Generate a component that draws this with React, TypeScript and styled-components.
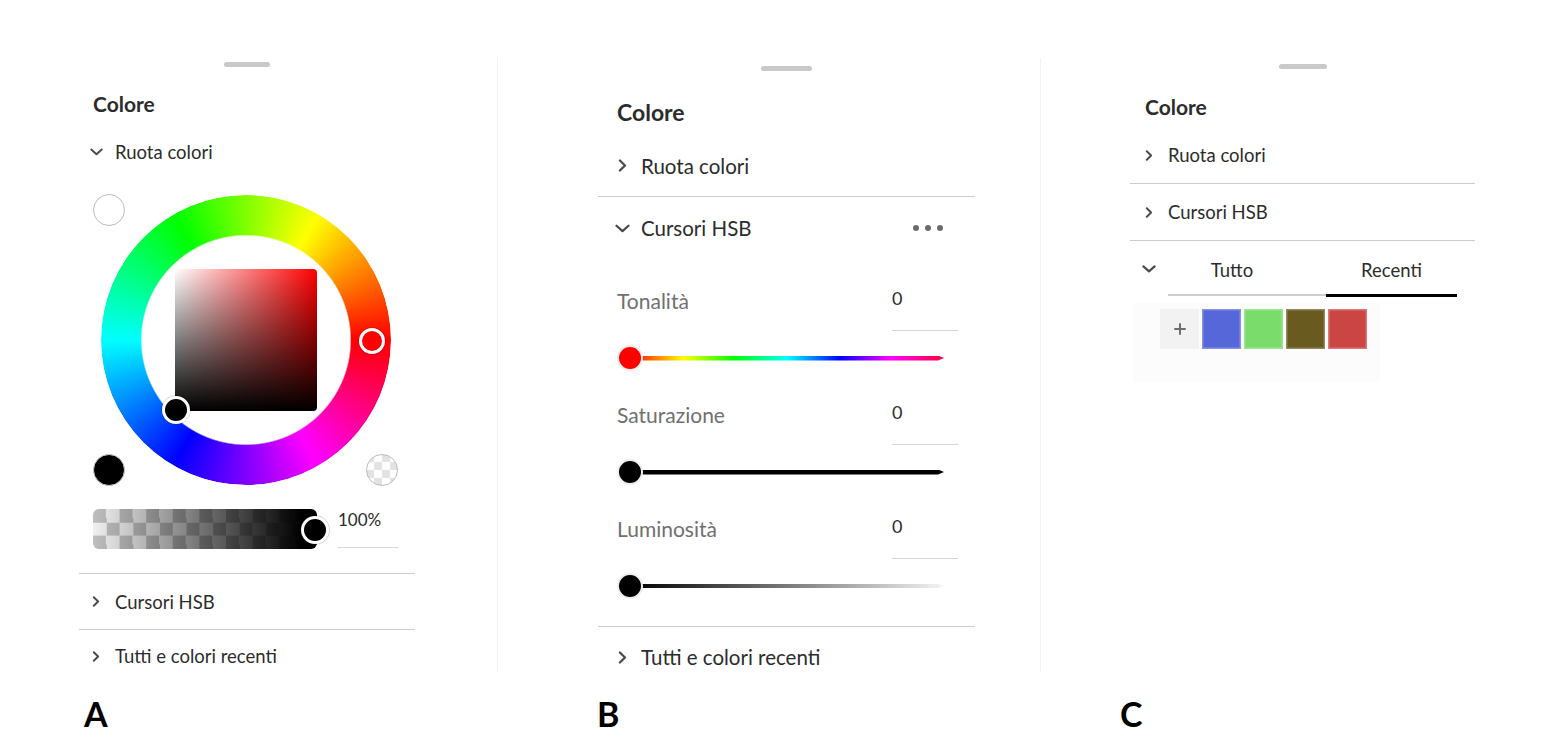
import React from "react";
import styled, { createGlobalStyle } from "styled-components";

const Global = createGlobalStyle`
  html, body { margin: 0; padding: 0; background: #ffffff; }
  body {
    font-family: Lato, "Noto Sans", sans-serif;
    color: #2c2c2c;
    width: 1560px;
    height: 752px;
    overflow: hidden;
  }
  * { box-sizing: border-box; }
`;

const Page = styled.main`
  display: flex;
  align-items: flex-start;
  padding: 58px 0 0 79px;
`;

const Column = styled.div<{ $width: number; $gap?: number }>`
  display: flex;
  flex-direction: column;
  flex-shrink: 0;
  width: ${(p) => p.$width}px;
  margin-left: ${(p) => p.$gap ?? 0}px;
`;

const Panel = styled.section<{ $padTop: number; $framed?: boolean; $padLeft?: number; $padRight?: number }>`
  height: 614px;
  display: flex;
  flex-direction: column;
  padding: ${(p) => p.$padTop}px ${(p) => p.$padRight ?? 0}px 0 ${(p) => p.$padLeft ?? 0}px;
  border-left: ${(p) => (p.$framed ? "1px solid #f3f3f3" : "none")};
  border-right: ${(p) => (p.$framed ? "1px solid #f3f3f3" : "none")};
  & > * { flex-shrink: 0; }
`;

const Handle = styled.div<{ $width: number }>`
  align-self: center;
  width: ${(p) => p.$width}px;
  height: 5px;
  border-radius: 3px;
  background: #c9c9c9;
`;

const Title = styled.h2<{ $size: number; $indent: number; $mt: number; $lh: number }>`
  margin: ${(p) => p.$mt}px 0 0 ${(p) => p.$indent}px;
  font-size: ${(p) => p.$size}px;
  line-height: ${(p) => p.$lh}px;
  font-weight: 700;
  color: #2c2c2c;
`;

const AccRow = styled.div<{ $height: number; $divider?: boolean; $size: number; $padLeft: number; $mt?: number }>`
  display: flex;
  align-items: center;
  height: ${(p) => p.$height + (p.$divider ? 1 : 0)}px;
  margin-top: ${(p) => p.$mt ?? 0}px;
  padding-left: ${(p) => p.$padLeft}px;
  border-bottom: ${(p) => (p.$divider ? "1px solid #cdcdcd" : "none")};
  font-size: ${(p) => p.$size}px;
  color: #2c2c2c;
`;

const IconBox = styled.span<{ $width: number; $gap: number }>`
  display: flex;
  align-items: center;
  justify-content: center;
  width: ${(p) => p.$width}px;
  margin-right: ${(p) => p.$gap}px;
  color: #4a4a4a;
`;

const RowText = styled.span`
  line-height: 24px;
`;

const Divider = styled.div<{ $mt: number }>`
  margin-top: ${(p) => p.$mt}px;
  height: 1px;
  background: #cdcdcd;
`;

const Dots = styled.span`
  display: flex;
  gap: 6px;
  margin-left: auto;
  margin-right: 32px;
`;

const Dot = styled.span`
  width: 6px;
  height: 6px;
  border-radius: 50%;
  background: #6b6b6b;
`;

/* ---------- Wheel (panel A) ---------- */

const WheelArea = styled.div`
  position: relative;
  width: 305px;
  height: 292px;
  margin: 22px 0 0 14px;
  padding-top: 1px;
  display: flex;
  justify-content: center;
  align-items: flex-start;
`;

const Wheel = styled.div`
  position: relative;
  width: 290px;
  height: 290px;
  border-radius: 50%;
  display: flex;
  align-items: center;
  justify-content: center;
`;

const HueRing = styled.div`
  position: absolute;
  inset: 0;
  border-radius: 50%;
  background: conic-gradient(from 90deg, #ff0000, #ff00ff, #0000ff, #00ffff, #00ff00, #ffff00, #ff0000);
  -webkit-mask: radial-gradient(circle closest-side, transparent 104px, #000 105.5px);
  mask: radial-gradient(circle closest-side, transparent 104px, #000 105.5px);
`;

const SBSquare = styled.div`
  position: relative;
  width: 142px;
  height: 142px;
  border-radius: 4px;
  background: linear-gradient(to bottom, rgba(0, 0, 0, 0), #000), linear-gradient(to right, #ffffff, #ff0000);
`;

const KnobOnWheel = styled.div<{ $x: number; $y: number; $size: number; $fill: string }>`
  position: absolute;
  left: ${(p) => p.$x - p.$size / 2}px;
  top: ${(p) => p.$y - p.$size / 2}px;
  width: ${(p) => p.$size}px;
  height: ${(p) => p.$size}px;
  border-radius: 50%;
  background: ${(p) => p.$fill};
  border: 3px solid #ffffff;
  box-shadow: 0 0 0 1px rgba(0, 0, 0, 0.12);
`;

const CornerSwatch = styled.div<{ $pos: "tl" | "bl" | "br"; $kind: "white" | "black" | "clear" }>`
  position: absolute;
  width: 32px;
  height: 32px;
  border-radius: 50%;
  ${(p) => (p.$pos === "tl" ? "left: 0; top: 0;" : p.$pos === "bl" ? "left: 0; bottom: 0;" : "right: 0; bottom: 0;")}
  border: 1.5px solid ${(p) => (p.$kind === "black" ? "#c9c9c9" : "#bdbdbd")};
  background: ${(p) =>
    p.$kind === "white"
      ? "#ffffff"
      : p.$kind === "black"
      ? "#000000"
      : "repeating-conic-gradient(#ffffff 0% 25%, #e3e3e3 0% 50%) 50% 50% / 16px 16px"};
`;

const AlphaRow = styled.div`
  display: flex;
  align-items: flex-start;
  height: 40px;
  margin: 23px 0 0 14px;
`;

const AlphaTrack = styled.div`
  position: relative;
  width: 224px;
  height: 40px;
  border-radius: 6px;
  background-image: linear-gradient(to right, rgba(0, 0, 0, 0.02), #000 93%),
    repeating-conic-gradient(#f5f5f5 0% 25%, #c2c2c2 0% 50%);
  background-size: 100% 100%, 26.6px 26.6px;
  background-position: 0 0, 0 0;
`;

const AlphaKnob = styled.div`
  position: absolute;
  left: 208px;
  top: 7px;
  width: 28px;
  height: 28px;
  border-radius: 50%;
  background: #000;
  border: 3px solid #fff;
  box-shadow: 0 0 0 1px rgba(0, 0, 0, 0.15);
`;

const AlphaValue = styled.div`
  margin-left: 21px;
  width: 60px;
  height: 39px;
  border-bottom: 1px solid #d9d9d9;
  font-size: 17px;
  line-height: 22px;
  color: #2c2c2c;
`;

/* ---------- HSB sliders (panel B) ---------- */

const SliderStack = styled.div`
  display: flex;
  flex-direction: column;
  gap: 26px;
  margin-top: 25px;
`;

const SliderGroup = styled.div`
  display: flex;
  flex-direction: column;
`;

const FieldRow = styled.div`
  display: flex;
  justify-content: space-between;
  align-items: flex-start;
  padding: 0 17px 0 19px;
`;

const FieldLabel = styled.span`
  margin-top: 3px;
  font-size: 21px;
  line-height: 28px;
  color: #707070;
`;

const ValueBox = styled.div`
  width: 66px;
  height: 47px;
  border-bottom: 1px solid #d6d6d6;
  font-size: 18px;
  line-height: 28px;
  color: #2c2c2c;
`;

const SliderRow = styled.div`
  position: relative;
  display: flex;
  align-items: center;
  width: 327px;
  height: 28px;
  margin: 13px 0 0 19px;
`;

const trackBg: Record<string, string> = {
  hue: "linear-gradient(to right, #ff0000, #ffff00 17%, #00ff00 33%, #00ffff 50%, #0000ff 67%, #ff00ff 83%, #ff0040)",
  sat: "#000000",
  lum: "linear-gradient(to right, #000000, #f4f4f4)",
};

const Track = styled.div<{ $kind: "hue" | "sat" | "lum" }>`
  flex: 1;
  margin-left: 13px;
  height: ${(p) => (p.$kind === "lum" ? 4 : 5)}px;
  background: ${(p) => trackBg[p.$kind]};
  clip-path: polygon(0 0, calc(100% - 6px) 0, 100% 50%, calc(100% - 6px) 100%, 0 100%);
`;

const Thumb = styled.div<{ $fill: string }>`
  position: absolute;
  left: 0;
  top: 1px;
  width: 26px;
  height: 26px;
  border-radius: 50%;
  background: ${(p) => p.$fill};
  border: 2px solid #eeeeee;
`;

/* ---------- Swatches (panel C) ---------- */

const TabsRow = styled.div`
  display: flex;
  align-items: stretch;
  height: 55px;
  padding-left: 10px;
`;

const TabList = styled.div`
  display: flex;
  margin-left: 10px;
`;

const Tab = styled.div<{ $width: number; $active?: boolean; $padRight?: number }>`
  display: flex;
  align-items: center;
  justify-content: center;
  width: ${(p) => p.$width}px;
  padding: 5px ${(p) => p.$padRight ?? 0}px 0 0;
  font-size: 18.5px;
  color: #2c2c2c;
  border-bottom: 2px solid ${(p) => (p.$active ? "#000000" : "#cfcfcf")};
  box-shadow: ${(p) => (p.$active ? "0 1px 0 #000000" : "none")};
`;

const SwatchArea = styled.div`
  width: 247px;
  height: 79px;
  margin: 7px 0 0 3px;
  padding: 6px 0 0 27px;
  background: #fcfcfc;
  display: flex;
  align-items: flex-start;
  gap: 3px;
`;

const PlusTile = styled.div`
  width: 39px;
  height: 40px;
  background: #f2f2f2;
  display: flex;
  align-items: center;
  justify-content: center;
  color: #6e6e6e;
`;

const Swatch = styled.div<{ $color: string }>`
  width: 39px;
  height: 40px;
  background: ${(p) => p.$color};
  box-shadow: inset 0 0 0 1.5px rgba(255, 255, 255, 0.28);
`;

const Letter = styled.div<{ $offset: number }>`
  margin: 25px 0 0 ${(p) => p.$offset}px;
  font-family: Lato, "Noto Sans", sans-serif;
  font-weight: 700;
  font-size: 34px;
  line-height: 34px;
  color: #000;
`;

/* ---------- icons ---------- */

const ChevronRight = ({ w = 8, h = 11 }: { w?: number; h?: number }) => (
  <svg width={w} height={h} viewBox="0 0 8 12" fill="none">
    <path d="M1.6 1.4 L6.3 6 L1.6 10.6" stroke="currentColor" strokeWidth="2.1" strokeLinecap="round" strokeLinejoin="round" />
  </svg>
);

const ChevronDown = ({ w = 13, h = 8 }: { w?: number; h?: number }) => (
  <svg width={w} height={h} viewBox="0 0 14 8" fill="none">
    <path d="M1.4 1.4 L7 6.4 L12.6 1.4" stroke="currentColor" strokeWidth="2.1" strokeLinecap="round" strokeLinejoin="round" />
  </svg>
);

const PlusIcon = () => (
  <svg width="12" height="12" viewBox="0 0 12 12" fill="none">
    <path d="M6 1 V11 M1 6 H11" stroke="currentColor" strokeWidth="2" strokeLinecap="round" />
  </svg>
);

export default function App() {
  return (
    <>
      <Global />
      <Page>
        {/* Panel A */}
        <Column $width={336}>
          <Panel $padTop={4}>
            <Handle $width={46} />
            <Title $size={21} $lh={24} $indent={14} $mt={25}>Colore</Title>
            <AccRow $height={40} $size={18.5} $padLeft={8} $mt={16}>
              <IconBox $width={18} $gap={10}><ChevronDown /></IconBox>
              <RowText>Ruota colori</RowText>
            </AccRow>
            <WheelArea>
              <CornerSwatch $pos="tl" $kind="white" />
              <CornerSwatch $pos="bl" $kind="black" />
              <CornerSwatch $pos="br" $kind="clear" />
              <Wheel>
                <HueRing />
                <SBSquare />
                <KnobOnWheel $x={271} $y={146} $size={26} $fill="#ff0000" />
                <KnobOnWheel $x={75} $y={215} $size={28} $fill="#000000" />
              </Wheel>
            </WheelArea>
            <AlphaRow>
              <AlphaTrack>
                <AlphaKnob />
              </AlphaTrack>
              <AlphaValue>100%</AlphaValue>
            </AlphaRow>
            <Divider $mt={24} />
            <AccRow $height={55} $divider $size={18.5} $padLeft={8}>
              <IconBox $width={18} $gap={10}><ChevronRight /></IconBox>
              <RowText>Cursori HSB</RowText>
            </AccRow>
            <AccRow $height={52} $size={18.5} $padLeft={8}>
              <IconBox $width={18} $gap={10}><ChevronRight /></IconBox>
              <RowText>Tutti e colori recenti</RowText>
            </AccRow>
          </Panel>
          <Letter $offset={5}>A</Letter>
        </Column>

        {/* Panel B */}
        <Column $width={544} $gap={82}>
          <Panel $padTop={8} $framed $padLeft={100} $padRight={65}>
            <Handle $width={51} />
            <Title $size={23} $lh={26} $indent={19} $mt={28}>Colore</Title>
            <AccRow $height={61} $divider $size={20.5} $padLeft={14} $mt={10}>
              <IconBox $width={20} $gap={9}><ChevronRight w={9} h={13} /></IconBox>
              <RowText>Ruota colori</RowText>
            </AccRow>
            <AccRow $height={62} $size={20.5} $padLeft={14}>
              <IconBox $width={20} $gap={9}><ChevronDown w={15} h={9} /></IconBox>
              <RowText>Cursori HSB</RowText>
              <Dots><Dot /><Dot /><Dot /></Dots>
            </AccRow>
            <SliderStack>
              <SliderGroup>
                <FieldRow>
                  <FieldLabel>Tonalità</FieldLabel>
                  <ValueBox>0</ValueBox>
                </FieldRow>
                <SliderRow>
                  <Track $kind="hue" />
                  <Thumb $fill="#ff0000" />
                </SliderRow>
              </SliderGroup>
              <SliderGroup>
                <FieldRow>
                  <FieldLabel>Saturazione</FieldLabel>
                  <ValueBox>0</ValueBox>
                </FieldRow>
                <SliderRow>
                  <Track $kind="sat" />
                  <Thumb $fill="#000000" />
                </SliderRow>
              </SliderGroup>
              <SliderGroup>
                <FieldRow>
                  <FieldLabel>Luminosità</FieldLabel>
                  <ValueBox>0</ValueBox>
                </FieldRow>
                <SliderRow>
                  <Track $kind="lum" />
                  <Thumb $fill="#000000" />
                </SliderRow>
              </SliderGroup>
            </SliderStack>
            <Divider $mt={26} />
            <AccRow $height={60} $size={20.5} $padLeft={14}>
              <IconBox $width={20} $gap={9}><ChevronRight w={9} h={13} /></IconBox>
              <RowText>Tutti e colori recenti</RowText>
            </AccRow>
          </Panel>
          <Letter $offset={100}>B</Letter>
        </Column>

        {/* Panel C */}
        <Column $width={345} $gap={89}>
          <Panel $padTop={6}>
            <Handle $width={48} />
            <Title $size={21} $lh={24} $indent={15} $mt={26}>Colore</Title>
            <AccRow $height={56} $divider $size={18.5} $padLeft={10} $mt={8}>
              <IconBox $width={18} $gap={10}><ChevronRight /></IconBox>
              <RowText>Ruota colori</RowText>
            </AccRow>
            <AccRow $height={56} $divider $size={18.5} $padLeft={10}>
              <IconBox $width={18} $gap={10}><ChevronRight /></IconBox>
              <RowText>Cursori HSB</RowText>
            </AccRow>
            <TabsRow>
              <IconBox $width={18} $gap={0}><ChevronDown w={14} h={8} /></IconBox>
              <TabList>
                <Tab $width={158} $padRight={30}>Tutto</Tab>
                <Tab $width={131} $active>Recenti</Tab>
              </TabList>
            </TabsRow>
            <SwatchArea>
              <PlusTile><PlusIcon /></PlusTile>
              <Swatch $color="#5668d9" />
              <Swatch $color="#79dc6b" />
              <Swatch $color="#695a20" />
              <Swatch $color="#cc4545" />
            </SwatchArea>
          </Panel>
          <Letter $offset={-10}>C</Letter>
        </Column>
      </Page>
    </>
  );
}
